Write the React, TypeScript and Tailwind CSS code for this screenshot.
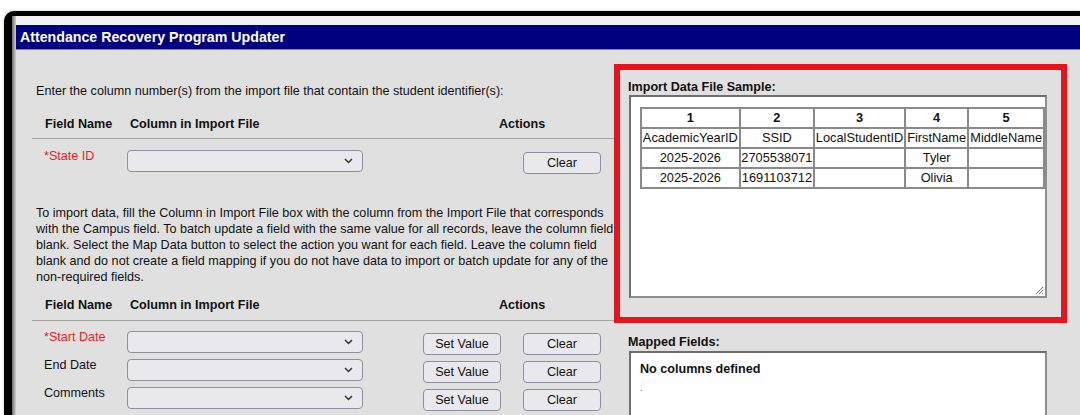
import React from "react";

// Sample rows shown in the import preview
const sampleHeaders = ["AcademicYearID", "SSID", "LocalStudentID", "FirstName", "MiddleName"];
const sampleRows = [
  ["2025-2026", "2705538071", "", "Tyler", ""],
  ["2025-2026", "1691103712", "", "Olivia", ""],
];
const colWidths = ["w-[99px]", "w-[75px]", "w-[91px]", "w-[64px]", "w-[76px]"];

const Chevron: React.FC = () => (
  <svg width="9" height="6" viewBox="0 0 9 6" className="text-[#333]">
    <polyline points="1,1 4.5,4.5 8,1" fill="none" stroke="currentColor" strokeWidth="1.5" />
  </svg>
);

const Select: React.FC = () => (
  <div className="w-[236px] h-[22px] bg-[#e9e9ed] border border-[#8f8f9d] rounded-[4px] flex items-center justify-end pr-[9px]">
    <Chevron />
  </div>
);

const Btn: React.FC<{ label: string }> = ({ label }) => (
  <button className="w-[78px] h-[22px] bg-[#e9e9ed] border border-[#8f8f9d] rounded-[4px] text-[12.6px] leading-[12px] text-[#111]">
    {label}
  </button>
);

const FieldRow: React.FC<{ label: string; required?: boolean; setValue?: boolean }> = ({
  label,
  required,
  setValue,
}) => (
  <div className="flex items-start h-[22px] pl-[12px]">
    <div className={`w-[83px] text-[12.6px] leading-[12px] ${required ? "text-[#f01c1c]" : "text-[#111]"}`}>
      {required ? "*" : ""}
      {label}
    </div>
    <Select />
    <div className="ml-[60px] w-[78px]">{setValue && <Btn label="Set Value" />}</div>
    <div className="ml-[22px]">
      <Btn label="Clear" />
    </div>
  </div>
);

const FieldHeader: React.FC<{ className?: string }> = ({ className }) => (
  <div className={`flex border-b border-[#a3a3a3] pb-[6px] text-[12.6px] leading-[16px] font-bold text-[#111] ${className ?? ""}`}>
    <div className="w-[98px] pl-[13px]">Field Name</div>
    <div className="w-[369px]">Column in Import File</div>
    <div>Actions</div>
  </div>
);

export default function App() {
  return (
    <div
      className="w-[1080px] h-[415px] overflow-hidden bg-white pt-[11px] pl-[4px]"
      style={{ fontFamily: '"Liberation Sans", Arial, sans-serif' }}
    >
      <div className="min-h-[420px] rounded-tl-[10px] border-t-[5px] border-l-[8px] border-black bg-[#e0e0e0] flex shadow-[0_0_3px_rgba(0,0,0,0.25)]">
        <div className="w-[4px] shrink-0 bg-gradient-to-r from-[#6a6a6a] to-[#d4d4d4]" />
        <div className="flex-1 flex flex-col">
          <div className="h-[9px] shrink-0 bg-[#f2f2f2]" />
          <div className="h-[25px] shrink-0 bg-[#000080] border-b border-[#8a8aa8] text-white font-bold text-[14.2px] leading-[24px] pl-[4px]">
            Attendance Recovery Program Updater
          </div>

          <div className="flex">
            {/* field mapping column */}
            <div className="w-[598px] shrink-0 overflow-hidden pl-[16px]">
              <p className="mt-[33px] pl-[4px] text-[12.6px] leading-[16px] text-[#111] whitespace-nowrap">
                Enter the column number(s) from the import file that contain the student identifier(s):
              </p>
              <FieldHeader className="mt-[17px]" />
              <div className="mt-[11px]">
                <FieldRow label="State ID" required />
              </div>
              <p className="mt-[33px] pl-[4px] text-[12.6px] leading-[16px] text-[#111] whitespace-nowrap">
                To import data, fill the Column in Import File box with the column from the Import File that corresponds
                <br />
                with the Campus field. To batch update a field with the same value for all records, leave the column field
                <br />
                blank. Select the Map Data button to select the action you want for each field. Leave the column field
                <br />
                blank and do not create a field mapping if you do not have data to import or batch update for any of the
                <br />
                non-required fields.
              </p>
              <FieldHeader className="mt-[12px] pb-[7px]" />
              <div className="mt-[10px] flex flex-col gap-[6px]">
                <FieldRow label="Start Date" required setValue />
                <FieldRow label="End Date" setValue />
                <FieldRow label="Comments" setValue />
              </div>
            </div>

            {/* sample + mapped fields */}
            <div className="flex-1 pt-[14px]">
              <div className="w-[453px] border-[6px] border-[#e8141c] pt-[9px] pb-[19px]">
                <div className="pl-[8px] text-[12.6px] leading-[16px] font-bold text-[#111]">Import Data File Sample:</div>
                <div className="relative ml-[9px] w-[418px] h-[203px] bg-white border-2 border-[#8d8d8d] border-t-[#6e6e6e] border-l-[#6e6e6e] overflow-hidden pt-[10px] pl-[9px]">
                  <table className="table-fixed border-collapse text-[12.8px] leading-[16px] text-[#111]">
                    <tbody>
                      <tr>
                        {sampleHeaders.map((_, i) => (
                          <td
                            key={i}
                            className={`${colWidths[i]} h-[20px] p-0 text-center font-bold border-2 border-[#8a8a8a]`}
                          >
                            {i + 1}
                          </td>
                        ))}
                      </tr>
                      <tr>
                        {sampleHeaders.map((h) => (
                          <td key={h} className="h-[20px] p-0 text-center border-2 border-[#8a8a8a] whitespace-nowrap overflow-hidden">
                            {h}
                          </td>
                        ))}
                      </tr>
                      {sampleRows.map((row, r) => (
                        <tr key={r}>
                          {row.map((c, i) => (
                            <td key={i} className="h-[20px] p-0 text-center border-2 border-[#8a8a8a]">
                              {c}
                            </td>
                          ))}
                        </tr>
                      ))}
                    </tbody>
                  </table>
                  <svg width="9" height="9" viewBox="0 0 9 9" className="absolute right-[1px] bottom-[1px] text-[#666]">
                    <line x1="8" y1="1" x2="1" y2="8" stroke="currentColor" strokeWidth="1" />
                    <line x1="8" y1="4" x2="4" y2="8" stroke="currentColor" strokeWidth="1" />
                    <line x1="8" y1="7" x2="7" y2="8" stroke="currentColor" strokeWidth="1" />
                  </svg>
                </div>
              </div>

              <div className="mt-[11px] pl-[14px] text-[12.6px] leading-[16px] font-bold text-[#111]">Mapped Fields:</div>
              <div className="ml-[15px] mt-[1px] w-[418px] h-[100px] bg-white border-2 border-[#8d8d8d] border-t-[#6e6e6e] border-l-[#6e6e6e] pt-[8px] pl-[9px]">
                <div className="text-[12.6px] leading-[16px] font-bold text-[#111]">No columns defined</div>
                <div className="mt-[3px] text-[10px] leading-[16px] text-[#777]">.</div>
              </div>
            </div>
          </div>
        </div>
      </div>
    </div>
  );
}
